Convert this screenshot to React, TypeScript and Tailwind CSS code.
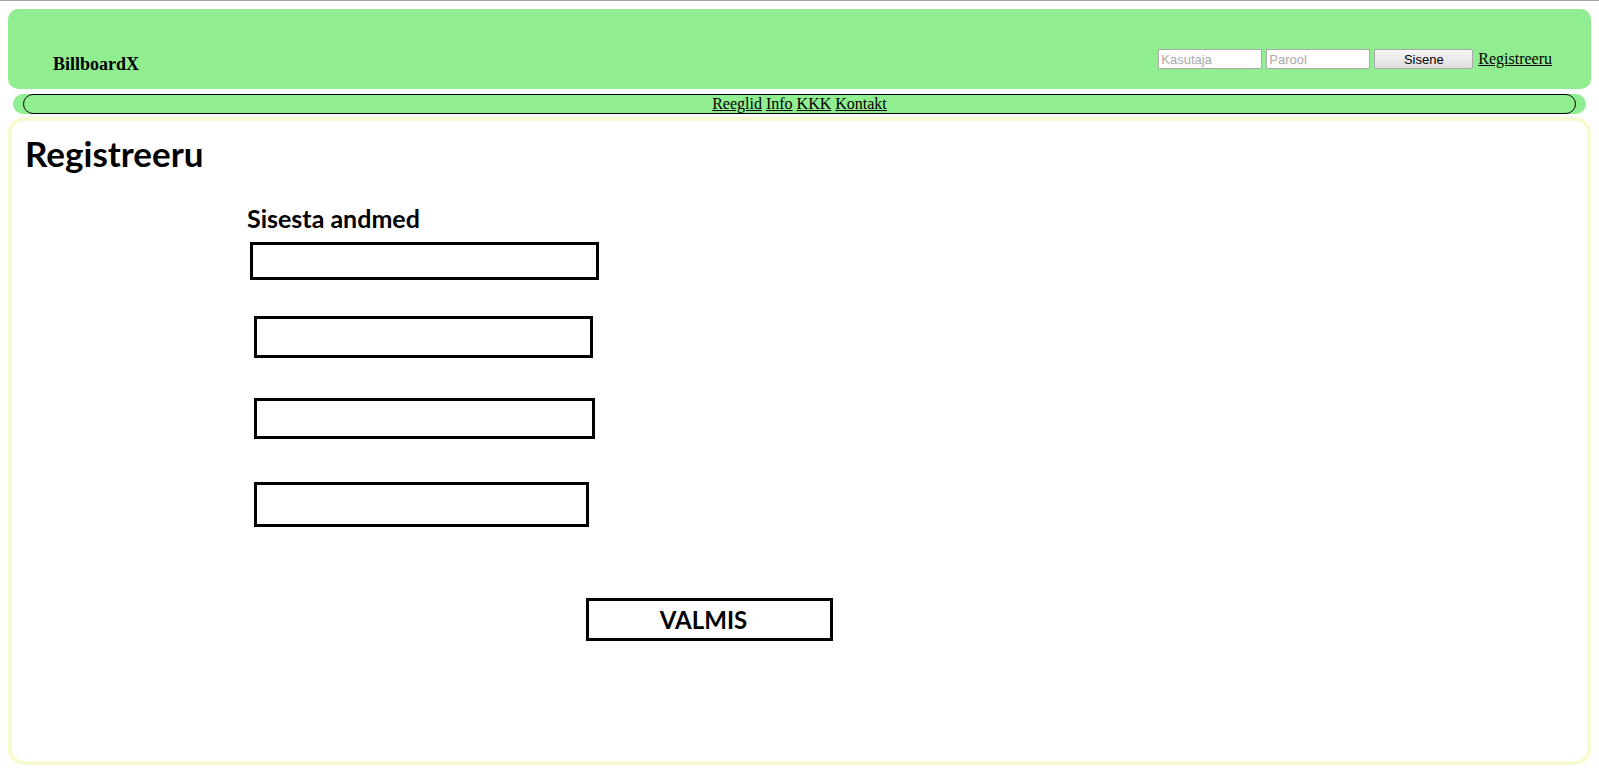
import React from "react";

const serif = "font-['Liberation_Serif',serif]";
const calibriLike = "font-['Lato',sans-serif]";

const navLinks = ["Reeglid", "Info", "KKK", "Kontakt"];

const fieldBoxes = [
  { mt: "mt-[9px]", ml: "ml-[238px]", w: "w-[349px]", h: "h-[38px]" },
  { mt: "mt-[36px]", ml: "ml-[242px]", w: "w-[339px]", h: "h-[42px]" },
  { mt: "mt-[40px]", ml: "ml-[242px]", w: "w-[341px]", h: "h-[41px]" },
  { mt: "mt-[43px]", ml: "ml-[242px]", w: "w-[335px]", h: "h-[45px]" },
];

export default function App() {
  return (
    <div className="min-h-[773px] bg-white border-t border-[#a3a3a3] px-2 pt-2">
      <Header />
      <NavBar />
      <main className="mt-[3px] h-[648px] rounded-[16px] border-4 border-[#fafad2] bg-white">
        <h1
          className={`${calibriLike} ml-[13px] mt-[11px] h-[42px] text-[35px] font-bold leading-[42px] text-black`}
        >
          Registreeru
        </h1>
        <h2
          className={`${calibriLike} ml-[235px] mt-[29px] h-[30px] text-[25px] font-bold leading-[30px] text-black`}
        >
          Sisesta andmed
        </h2>
        {fieldBoxes.map((box, index) => (
          <input
            key={index}
            className={`${box.mt} ${box.ml} ${box.w} ${box.h} block border-[3px] border-black bg-white px-2 outline-none`}
            type="text"
          />
        ))}
        <button
          className={`${calibriLike} ml-[574px] mt-[71px] block h-[43px] w-[247px] border-[3px] border-black bg-white pr-[12px] text-[24px] font-bold text-black`}
          type="button"
        >
          VALMIS
        </button>
      </main>
    </div>
  );
}

function Header() {
  return (
    <header className="flex h-[80px] items-start justify-between rounded-[10px] bg-[#90ee90] pl-[45px] pr-[39px] pt-[40px]">
      <div className={`${serif} mt-[6px] text-[18px] font-bold leading-[18px] text-black`}>
        BillboardX
      </div>
      <div className="flex h-[20px] items-center gap-[4px]">
        <input
          className="h-[20px] w-[104px] border border-[#a9a9a9] bg-white px-[2px] font-['Liberation_Sans',sans-serif] text-[13px] text-black placeholder:text-[#a9a9a9] outline-none"
          placeholder="Kasutaja"
          type="text"
        />
        <input
          className="h-[20px] w-[104px] border border-[#a9a9a9] bg-white px-[2px] font-['Liberation_Sans',sans-serif] text-[13px] text-black placeholder:text-[#a9a9a9] outline-none"
          placeholder="Parool"
          type="password"
        />
        <button
          className="h-[20px] w-[99px] rounded-[2px] border border-[#a9a9a9] bg-gradient-to-b from-[#f6f6f6] to-[#dedede] font-['Liberation_Sans',sans-serif] text-[13px] text-black"
          type="button"
        >
          Sisene
        </button>
        <a className={`${serif} ml-[1px] text-[16px] text-black underline`} href="#">
          Registreeru
        </a>
      </div>
    </header>
  );
}

function NavBar() {
  return (
    <nav className="mx-[5px] mt-[5px] h-[20px] rounded-full bg-[#90ee90] px-[10px]">
      <div
        className={`${serif} flex h-full items-center justify-center gap-[4px] rounded-full border border-black text-[16px] leading-none text-black`}
      >
        {navLinks.map((link) => (
          <a className="underline" href="#" key={link}>
            {link}
          </a>
        ))}
      </div>
    </nav>
  );
}
